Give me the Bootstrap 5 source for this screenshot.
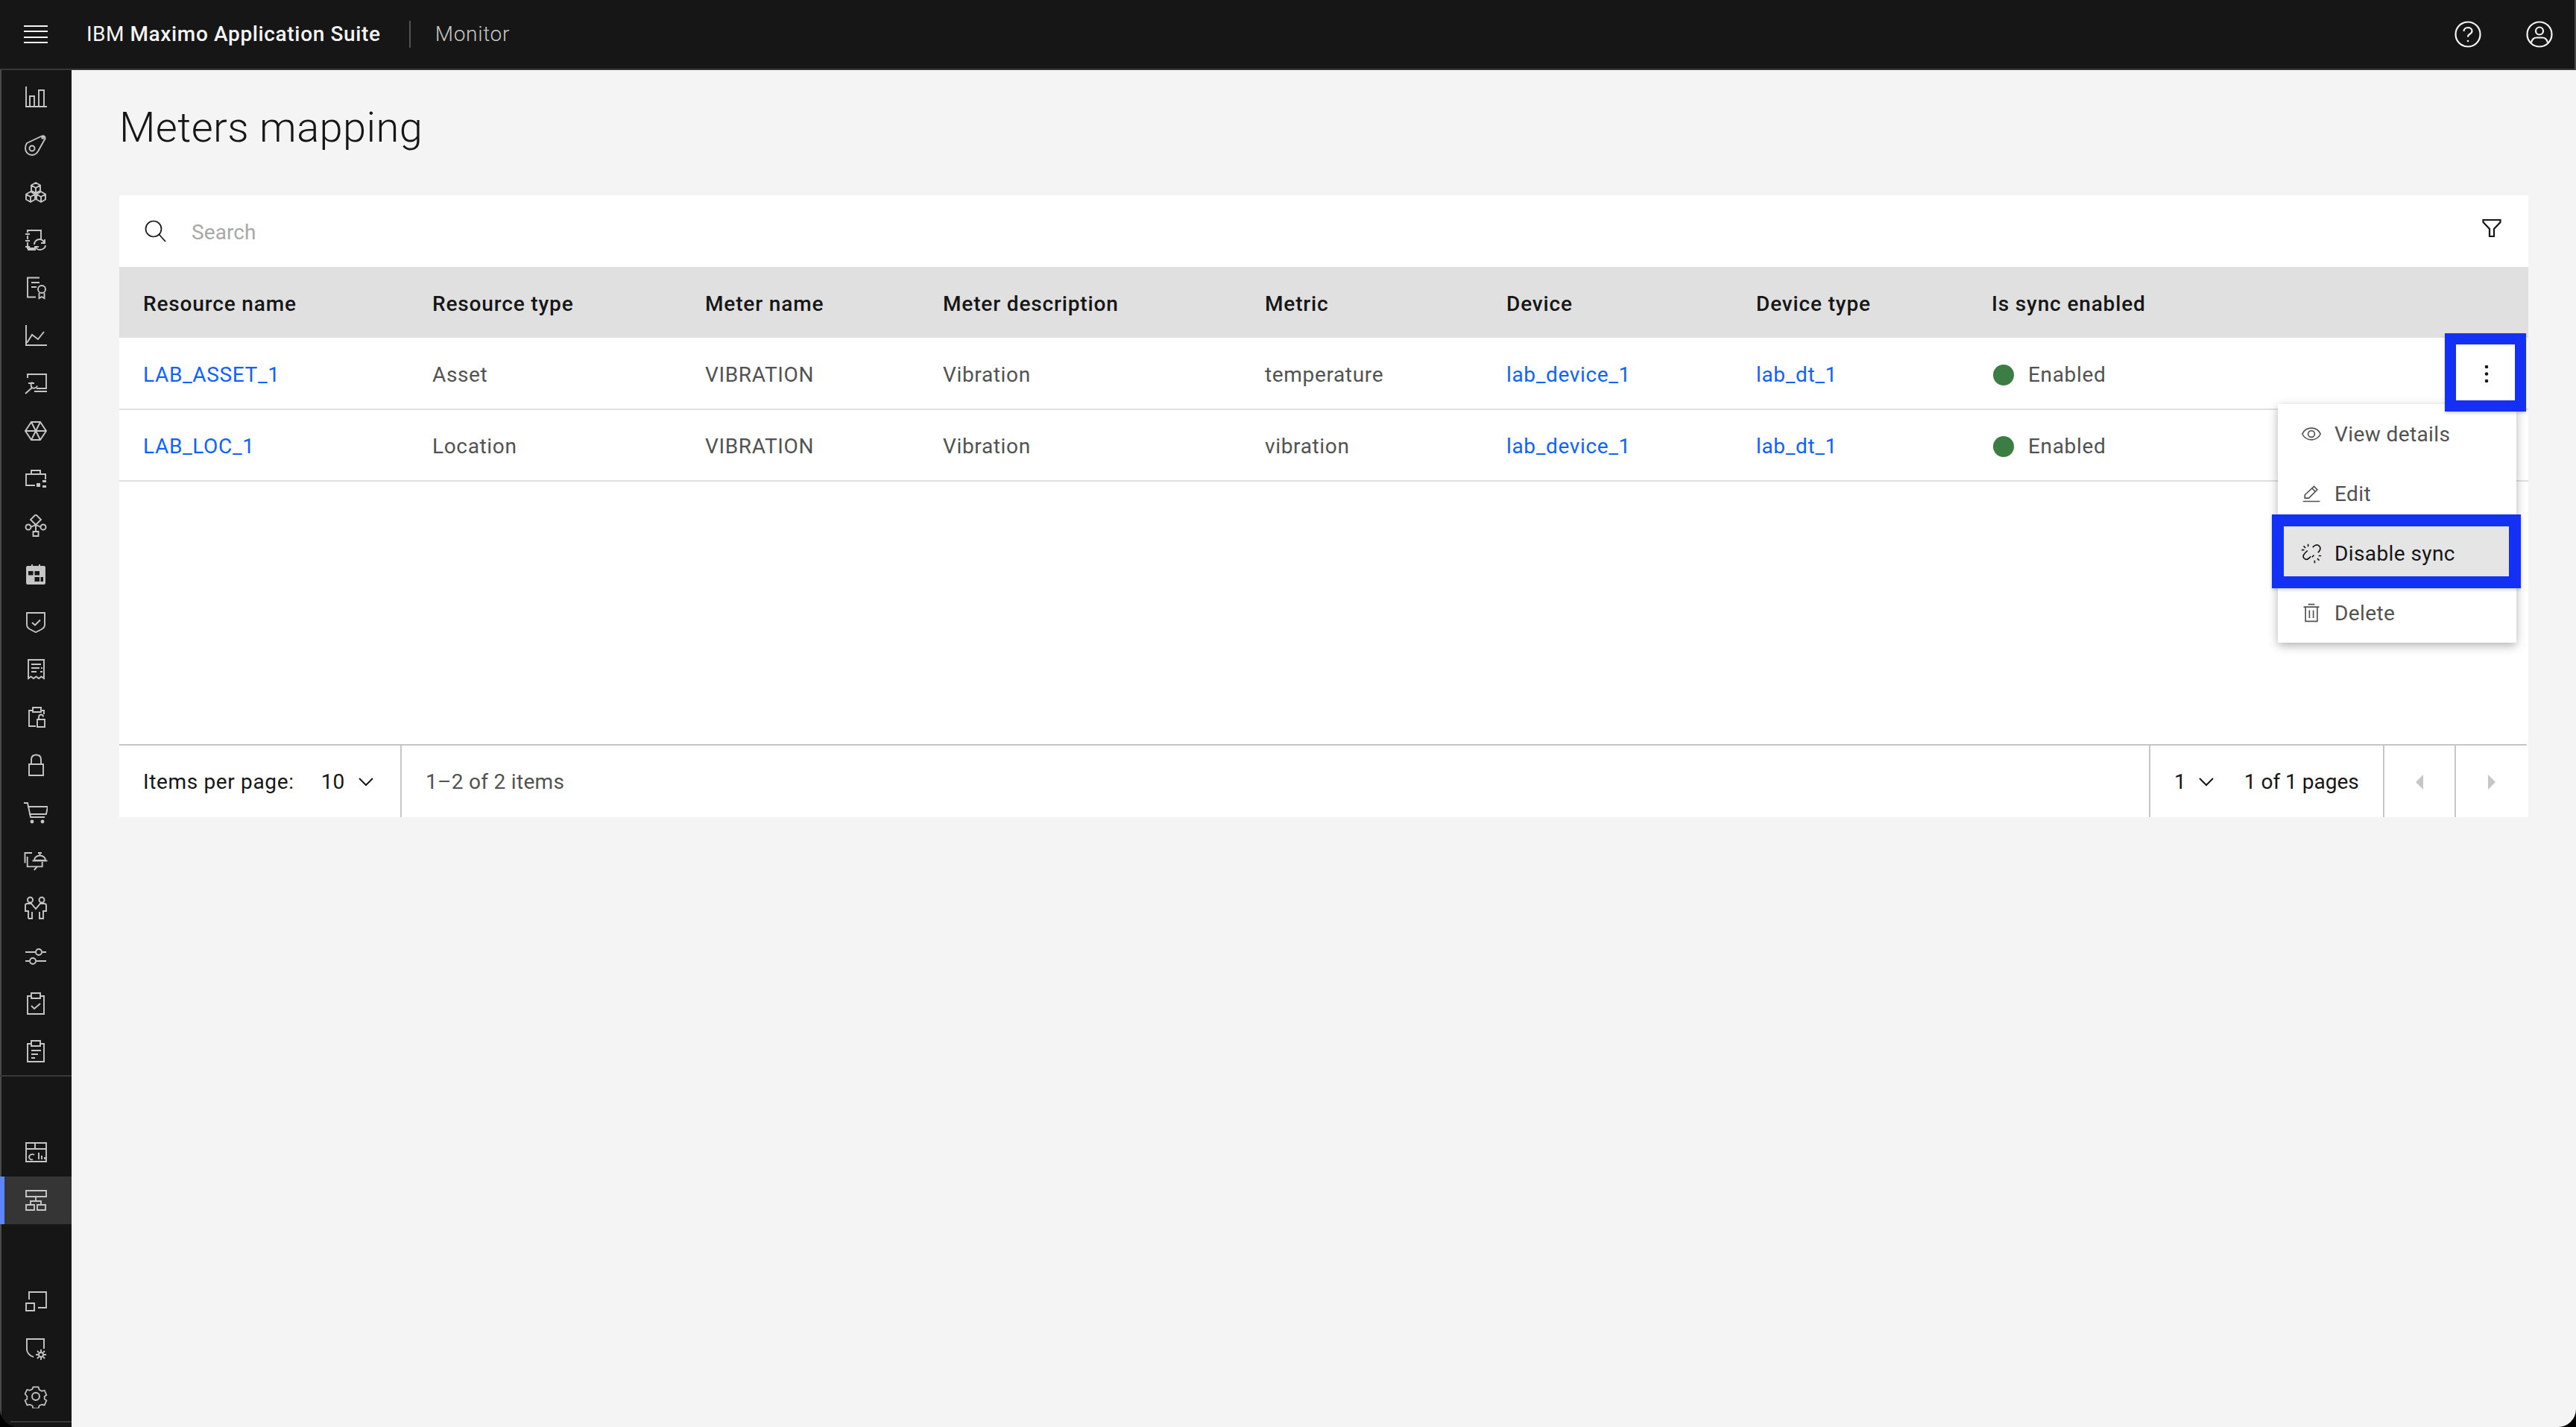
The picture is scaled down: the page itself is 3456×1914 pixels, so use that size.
<!doctype html>
<html><head><meta charset="utf-8"><title>Meters mapping</title>
<link href="https://cdn.jsdelivr.net/npm/bootstrap@5.3.0/dist/css/bootstrap.min.css" rel="stylesheet">
<style>
html,body{height:100%;margin:0;background:#000}
body{font-family:"Roboto","Liberation Sans",sans-serif;font-size:28px;color:#161616;overflow:hidden}
.appframe{height:1914px;width:3456px;position:relative;overflow:hidden;background:#f4f4f4}
.topbar{height:94px;background:#161616;border-bottom:2px solid #393939;padding-left:32px;padding-right:31px;flex:none}
.burger{width:32px;height:24px;margin-right:52px;display:flex;flex-direction:column;justify-content:space-between}
.burger i{display:block;height:2px;background:#f4f4f4}
.brandname{color:#f4f4f4;font-size:28px;letter-spacing:.5px}
.brandname b{font-weight:500;letter-spacing:.65px}
.brandsep{width:2px;height:36px;background:#525252;margin:0 33px 0 38px}
.appname{color:#c6c6c6;font-size:28px;font-weight:300;letter-spacing:.7px}
.topicon{width:36px;height:36px}
.rail{width:96px;background:#161616;border-left:2px solid #4a4a4a;padding-top:4px;flex:none;position:relative}
.railitem{height:64px;display:flex;align-items:center;justify-content:center;padding-right:2px}
.railitem svg{width:32px;height:32px;fill:none;stroke:#c6c6c6;stroke-width:1.9}
.railactive{background:#353535;border-left:6px solid #5d85ff;margin-left:-2px;padding-right:0;padding-left:0}
.railactive svg{margin-left:-6px}
.raildiv{height:2px;background:#393939;margin-left:-2px;margin-bottom:70px}
.railend{margin-top:71px}
.railbase{position:absolute;left:12px;right:0;bottom:6px;height:2px;background:#393939}
.pagebody{padding:0 64px 0 64px;flex:1;min-width:0}
.pagetitle{font-size:56px;font-weight:300;height:168px;margin:0;padding-top:44px;line-height:66px;color:#161616;letter-spacing:.4px}
.datacard{background:#fff;width:3232px}
.searchrow{height:96px;padding:0 36px 0 34px}
.searchrow .hint{color:#a8a8a8;margin-left:33px;padding-top:3px;letter-spacing:.1px}
.filtericon{margin-bottom:8px}
.tblwrap{height:640px}
.datatable{table-layout:fixed;width:100%;margin:0;font-size:28px;letter-spacing:.65px}
.datatable th{background:#e0e0e0;height:95px;padding:4px 0 0 32px;vertical-align:middle;font-weight:500;color:#161616;border:0;font-size:28px;letter-spacing:.85px}
.datatable td{height:96px;padding:4px 0 0 32px;vertical-align:middle;color:#525252;border:0;border-bottom:2px solid #e0e0e0;background:#fff}
.datatable a{color:#0f62fe;text-decoration:none}
.statusdot{display:inline-block;width:28px;height:28px;border-radius:50%;background:#3b7d42;margin:0 19px 0 2px;vertical-align:-5px}
.pager{height:98px;width:3230px;border-top:2px solid #c6c6c6;background:#fff}
.pagercell{height:96px;display:flex;align-items:center;padding-top:2px}
.pagersep{border-right:2px solid #c6c6c6}
.muted{color:#525252;letter-spacing:.3px}
.spaced{letter-spacing:.65px}
.chev{width:20px;height:12px;fill:none;stroke:#161616;stroke-width:2}
.arrowcell{width:96px;justify-content:center}
.overflowmenu{position:absolute;left:3056px;top:542px;width:320px;background:#fff;box-shadow:0 4px 12px rgba(0,0,0,.3);padding:0;list-style:none;margin:0}
.overflowmenu li{height:80px;display:flex;align-items:center;padding:2px 0 0 31px;color:#525252;gap:17px;letter-spacing:.4px}
.overflowmenu li.hot{background:#e5e5e5;color:#161616}
.overflowmenu svg{width:28px;height:28px;fill:none;stroke:#525252;stroke-width:1.9;margin-top:-2px}
.overflowmenu li.hot svg{stroke:#161616}
.kebabbox{position:absolute;left:3295px;top:462px;width:79px;height:75px;background:#fff;box-shadow:0 2px 6px rgba(0,0,0,.3);display:flex;align-items:center;justify-content:center;padding:3px 0 0 2px}
.callout{position:absolute;border:16px solid #1430f5;box-shadow:0 2px 4px rgba(0,0,0,.2)}
.framer{position:absolute;right:0;top:0;height:94px;width:2px;background:#4a4a4a}
.windowedge{position:absolute;inset:0;border-radius:0 0 24px 24px;box-shadow:0 0 0 40px #000;pointer-events:none}
</style></head><body>
<div class="appframe d-flex flex-column">
<header class="topbar d-flex align-items-center">
 <div class="burger"><i></i><i></i><i></i><i></i></div>
 <span class="brandname">IBM <b>Maximo Application Suite</b></span>
 <span class="brandsep"></span>
 <span class="appname">Monitor</span>
 <div class="ms-auto d-flex align-items-center" style="gap:60px">
  <svg class="topicon" viewBox="0 0 36 36" fill="none" stroke="#f4f4f4" stroke-width="2.2"><circle cx="18" cy="18" r="16.5"/><path d="M12.500 14c0-3.200 2.400-5 5.500-5s5.500 1.800 5.500 4.600c0 2-1.200 3.200-3 4.200-1.700.9-2.500 1.800-2.500 3.700"/><circle cx="18" cy="27" r="1.300" fill="#f4f4f4" stroke="none"/></svg>
  <svg class="topicon" viewBox="0 0 36 36" fill="none" stroke="#f4f4f4" stroke-width="2.2"><circle cx="18" cy="18" r="16.5"/><circle cx="18" cy="13.5" r="5"/><path d="M7 29c1-4 4-6.500 7-6.500h8c3 0 6 2.500 7 6.500"/></svg>
 </div>
</header>
<div class="d-flex flex-grow-1" style="min-height:0">
<nav class="rail d-flex flex-column">
 <div class="railitem"><svg viewBox="0 0 32 32"><path d="M3 2v27h28M8 28V15h6v13M20 28V7h7v21"/></svg></div>
 <div class="railitem"><svg viewBox="0 0 32 32"><path d="M4 14 24 4.500c2-1 4 0 4.500 2 .4 1.500-.2 2.800-1.300 3.800L19 25c-2 3-5 5-8 5-5 0-9-4-9-9 0-3 .8-5 2-7z"/><circle cx="11" cy="21" r="3.500"/><circle cx="25.500" cy="6.500" r="1.300"/></svg></div>
 <div class="railitem"><svg viewBox="0 0 32 32"><path d="M16 3l6 3.500v7L16 17l-6-3.500v-7zM10 6.500l6 3.500 6-3.500M16 10v7M9 15l6 3.500v7L9 29l-6-3.500v-7zM3 18.500 9 22l6-3.500M9 22v7M23 15l6 3.500v7L23 29l-6-3.500v-7zM17 18.500l6 3.500 6-3.500M23 22v7"/></svg></div>
 <div class="railitem"><svg viewBox="0 0 32 32"><path d="M5 6V3h18v12M5 10v5M5 19v5M5 28v-1h8v2H5M2 8h6M2 17h6M2 25h6"/><path d="M14 22c0-4 3-7 7-7 3 0 5 1.500 6 4M29 23c0 3-3 6-7.500 6-3 0-5-1.500-6-4"/><path d="M28 15v5h-5M15 30v-5h5"/></svg></div>
 <div class="railitem"><svg viewBox="0 0 32 32"><path d="M21 2.500H5v26h11"/><path d="M10 9h11M10 15h7"/><circle cx="24" cy="18" r="5"/><path d="M20.500 23v7l3.500-2 3.500 2v-7"/></svg></div>
 <div class="railitem"><svg viewBox="0 0 32 32"><path d="M3 2v27h28M4 26l7-11 8 6 8-10"/></svg></div>
 <div class="railitem"><svg viewBox="0 0 32 32"><path d="M5 9V4h25v19H17M14 27h17"/><path d="M2 30l9-8M11 22c-2-2-2-6 .5-7.500M11 22c3 2 6 0 7-2.500M6 16h8"/></svg></div>
 <div class="railitem"><svg viewBox="0 0 32 32"><path d="M10 4h12l8 12-8 12H10L2 16zM10 4l12 24M22 4 10 28M2 16h28"/></svg></div>
 <div class="railitem"><svg viewBox="0 0 32 32"><path d="M15 25H3V10h26v7M10 10V5h12v5"/><path d="M17 22h5v5h-5zM25 18h5v3h-5zM25 25h5v3h-5z" fill="#c6c6c6" stroke="none"/></svg></div>
 <div class="railitem"><svg viewBox="0 0 32 32"><path d="M16 0l7 7-7 7-7-7zM16 14v10M9 17l7-3 7 3"/><circle cx="6" cy="17" r="3.500"/><circle cx="26" cy="17" r="3.500"/><path d="M12.500 23h7v6h-7z"/></svg></div>
 <div class="railitem"><svg viewBox="0 0 32 32"><path d="M5 6h22a1 1 0 0 1 1 1v21a1 1 0 0 1-1 1H5a1 1 0 0 1-1-1V7a1 1 0 0 1 1-1z" fill="#c6c6c6"/><path d="M11 3v6M21 3v6"/><path d="M6 12h6.500v5.500H6zM14.500 12H21v5.500h-6.500zM14.500 20H21v6h-6.500zM22.500 20H26v6h-3.500z" fill="#161616" stroke="none"/></svg></div>
 <div class="railitem"><svg viewBox="0 0 32 32"><path d="M4 4h24v16c0 3-2 5-5 6.500L16 30l-7-3.500C6 25 4 23 4 20z"/><path d="M11 17l4 3.500 7-7"/></svg></div>
 <div class="railitem"><svg viewBox="0 0 32 32"><path d="M6 28V3h21v25l-3.500-2.500L20 28l-3.500-2.500L13 28l-3.500-2.500z"/><path d="M10 9h13M10 14h11M10 19h7M23 14h2M22 19h3"/></svg></div>
 <div class="railitem"><svg viewBox="0 0 32 32"><path d="M12 7H7v21h9M24 7h3v5"/><path d="M12 3h11v6H12z"/><path d="M18 19h10v10H18zM20 19v-3c0-2 1-3.500 3-3.500s3 1.500 3 3"/></svg></div>
 <div class="railitem"><svg viewBox="0 0 32 32"><path d="M7 15h19v15H7zM10 15V9c0-4 2.500-6.500 6.500-6.500S23 5 23 9v6"/></svg></div>
 <div class="railitem"><svg viewBox="0 0 32 32"><path d="M0 3h5l4 19h19"/><path d="M5 8h27l-2 10H8"/><circle cx="11" cy="28" r="1.500" fill="#c6c6c6"/><circle cx="25" cy="28" r="1.500" fill="#c6c6c6"/></svg></div>
 <div class="railitem"><svg viewBox="0 0 32 32"><path d="M11 6H1.500v13.500M4.700 11v13.400h20V18M18 24.400 13.700 29"/><path d="M14 16c0-4 3.500-6.500 7.500-6.500S29 12 29 16zM11.500 16.500h20M21.500 9V6M19 6h5"/></svg></div>
 <div class="railitem"><svg viewBox="0 0 32 32"><circle cx="8.500" cy="5" r="3.500"/><circle cx="24" cy="5" r="3.500"/><path d="M6 30V20H2v-8c0-1 1-2 3-2h5l6 7 6-7h5c2 0 3 1 3 2v8h-4v10h-5v-9M11 21v9H6"/></svg></div>
 <div class="railitem"><svg viewBox="0 0 32 32"><path d="M2 11h13M25 11h5M2 23h5M17 23h13"/><circle cx="20" cy="11" r="4"/><circle cx="12" cy="23" r="4"/></svg></div>
 <div class="railitem"><svg viewBox="0 0 32 32"><path d="M10 6H5v24h22V6h-5"/><path d="M10 2h12v7H10zM10 19l4 4 8-7"/></svg></div>
 <div class="railitem"><svg viewBox="0 0 32 32"><path d="M10 6H5v24h22V6h-5"/><path d="M10 2h12v7H10zM10 15h13M10 20h9M10 25h5"/></svg></div>
 <div class="raildiv"></div>
 <div class="railitem"><svg viewBox="0 0 32 32"><path d="M3 3h27v25H3zM3 11h27M15 3v8M14 19c-3-2-7 0-7 3s3 4 5 3M20 16v9M24 20v5M28 22v3"/></svg></div>
 <div class="railitem railactive"><svg viewBox="0 0 32 32"><path d="M3 3h27v8H3zM16 11v6M9 21v-4h14v4M3 22h11v7H3zM18 22h11v7H18z"/></svg></div>
 <div class="railend"></div>
 <div class="railitem"><svg viewBox="0 0 32 32"><path d="M7 14V4h23v21H19M3 19h11v10H3z"/></svg></div>
 <div class="railitem"><svg viewBox="0 0 32 32"><path d="M13 27c-5-1-9-6-9-10V3h23v13"/><circle cx="23" cy="24" r="3"/><path d="M23 17v3M23 28v3M16 24h3M27 24h3M18 19l2 2M26 27l2 2M18 29l2-2M26 21l2-2"/></svg></div>
 <div class="railitem"><svg viewBox="0 0 32 32"><circle cx="16" cy="16" r="5"/><path d="M12 2h8l1 4 4 2 4-1 3 7-3 2v4l3 2-3 7-4-1-4 2-1 4h-8l-1-4-4-2-4 1-3-7 3-2v-4L0 12l3-6 4 1 4-2z" transform="translate(1.600 1.600) scale(.9)"/></svg></div>
 <div class="railbase"></div>
</nav>
<main class="pagebody">
 <h1 class="pagetitle">Meters mapping</h1>
 <div class="datacard">
  <div class="searchrow d-flex align-items-center">
   <svg width="30" height="30" viewBox="0 0 30 30" fill="none" stroke="#161616" stroke-width="1.700"><circle cx="12" cy="12" r="10.500"/><path d="M19 19l9 10"/></svg>
   <span class="hint">Search</span>
   <svg class="ms-auto filtericon" width="26" height="26" viewBox="0 0 26 26" fill="none" stroke="#161616" stroke-width="2.200"><path d="M1.500 2h23v3L16 14v10h-6V14L1.500 5z"/></svg>
  </div>
  <div class="tblwrap">
  <table class="table datatable">
   <colgroup><col style="width:388px"><col style="width:366px"><col style="width:319px"><col style="width:432px"><col style="width:324px"><col style="width:335px"><col style="width:316px"><col style="width:752px"></colgroup>
   <thead><tr><th>Resource name</th><th>Resource type</th><th>Meter name</th><th>Meter description</th><th>Metric</th><th>Device</th><th>Device type</th><th>Is sync enabled</th></tr></thead>
   <tbody>
   <tr><td><a href="#">LAB_ASSET_1</a></td><td>Asset</td><td>VIBRATION</td><td>Vibration</td><td>temperature</td><td><a href="#">lab_device_1</a></td><td><a href="#">lab_dt_1</a></td><td><span class="statusdot"></span>Enabled</td></tr>
   <tr><td><a href="#">LAB_LOC_1</a></td><td>Location</td><td>VIBRATION</td><td>Vibration</td><td>vibration</td><td><a href="#">lab_device_1</a></td><td><a href="#">lab_dt_1</a></td><td><span class="statusdot"></span>Enabled</td></tr>
   </tbody>
  </table>
  </div>
  <div class="pager d-flex">
   <div class="pagercell pagersep" style="width:379px;padding-left:32px"><span class="spaced">Items per page:</span><span style="margin-left:36px">10</span><svg class="chev" style="margin-left:19px" viewBox="0 0 20 12"><path d="M1 1l9 9 9-9"/></svg></div>
   <div class="pagercell muted flex-grow-1" style="padding-left:32px">1–2 of 2 items</div>
   <div class="pagercell pagersep" style="border-left:2px solid #c6c6c6;width:316px;padding-left:32px">1<svg class="chev" style="margin-left:17px" viewBox="0 0 20 12"><path d="M1 1l9 9 9-9"/></svg><span style="margin-left:41px">1 of 1 pages</span></div>
   <div class="pagercell pagersep arrowcell"><svg width="10" height="20" viewBox="0 0 10 20"><path d="M10 0v20L0 10z" fill="#c6c6c6"/></svg></div>
   <div class="pagercell arrowcell" style="width:95px"><svg width="10" height="20" viewBox="0 0 10 20"><path d="M0 0v20l10-10z" fill="#c6c6c6"/></svg></div>
  </div>
 </div>
</main>
</div>
<ul class="overflowmenu">
 <li><svg viewBox="0 0 32 32"><path d="M2 16c3-6 8-9 14-9s11 3 14 9c-3 6-8 9-14 9S5 22 2 16z"/><circle cx="16" cy="16" r="5"/></svg>View details</li>
 <li><svg viewBox="0 0 32 32"><path d="M3 28h26M6 23v-5L20 5l5 5-13 13z"/><path d="M17 8l5 5"/></svg>Edit</li>
 <li class="hot"><svg viewBox="0 0 32 32"><path d="M10 12l-4 4c-3 3-3 6-1 8s5 2 8-1l2-2M18 7l2-2c3-2 6-2 8 0s2 5 0 8l-2 2M20 19l-3 3M4 5l3 3M11 2v4M1 11h4M25 24l3 3M21 27v4M27 20h4"/></svg>Disable sync</li>
 <li><svg viewBox="0 0 32 32"><path d="M4 7h24M11 3h10M7 7v22h18V7M13 12v12M19 12v12"/></svg>Delete</li>
</ul>
<div class="callout" style="left:3048px;top:690px;width:334px;height:99px"></div>
<div class="kebabbox"><svg width="8" height="26" viewBox="0 0 8 26"><circle cx="4" cy="4" r="2.300" fill="#161616"/><circle cx="4" cy="13.500" r="2.300" fill="#161616"/><circle cx="4" cy="23" r="2.300" fill="#161616"/></svg></div>
<div class="callout" style="left:3280px;top:447px;width:109px;height:105px;border-width:15px"></div>
<div class="framer"></div>
<div class="windowedge"></div>
</div>
<script src="https://cdn.jsdelivr.net/npm/bootstrap@5.3.0/dist/js/bootstrap.bundle.min.js"></script>
</body></html>
